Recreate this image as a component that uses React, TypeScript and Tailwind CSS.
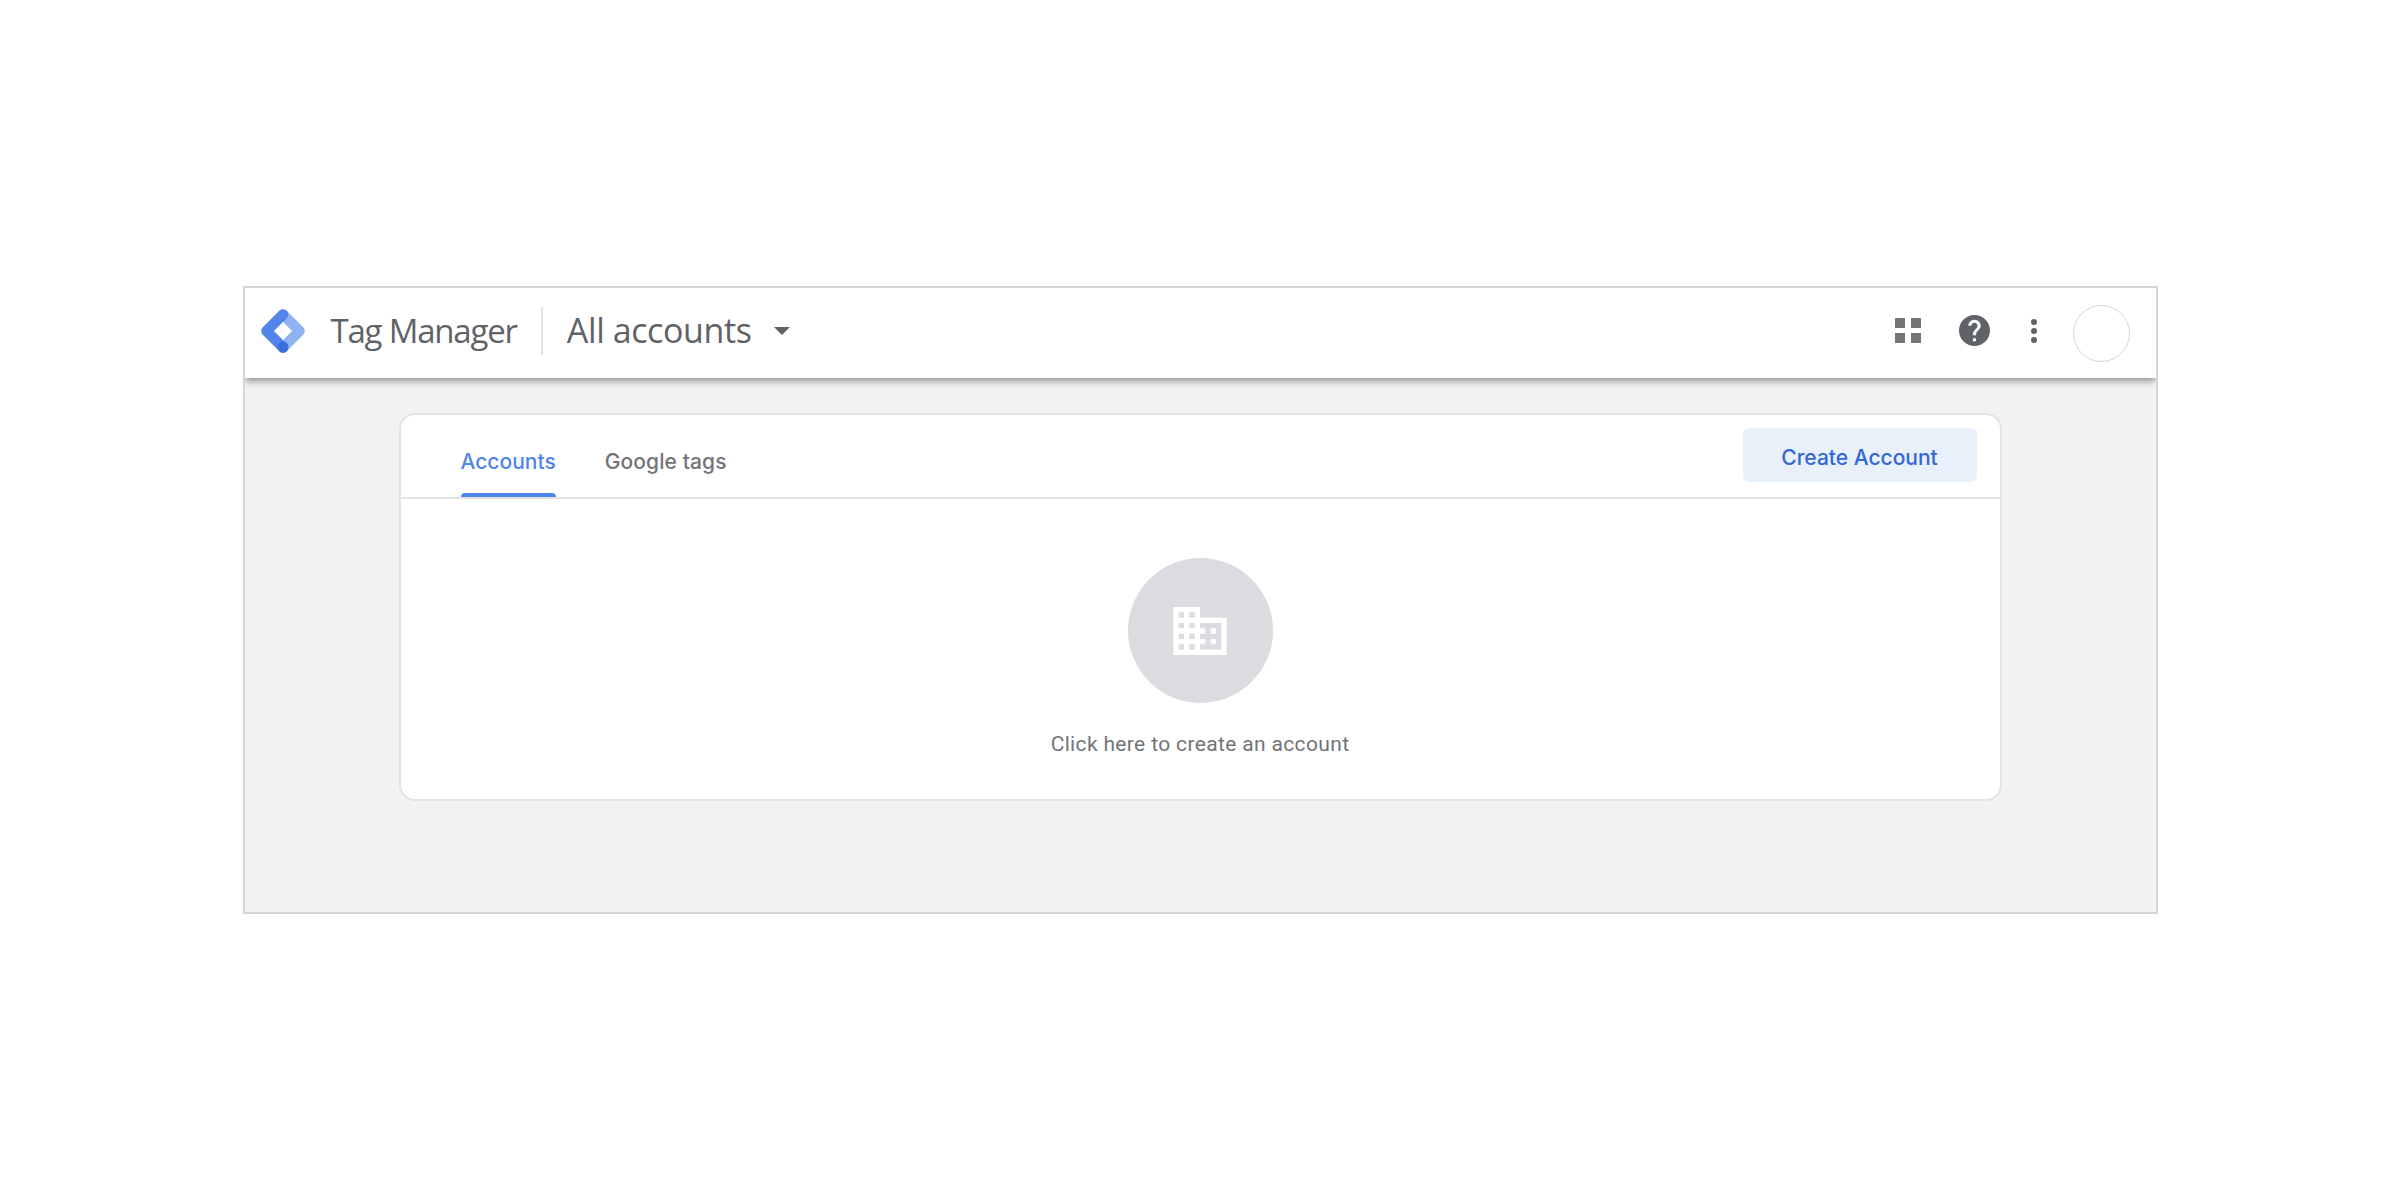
import React from 'react';

const GtmLogo = () => (
  <svg width="46" height="46" viewBox="0 0 46 46" className="shrink-0">
    <path d="M23 6.5 L39.5 23 L23 39.5" fill="none" stroke="#8fb2f3" strokeWidth="10.5" strokeLinecap="round" strokeLinejoin="round" />
    <path d="M23 6.5 L6.5 23 L23 39.5" fill="none" stroke="#5285ec" strokeWidth="10.5" strokeLinecap="round" strokeLinejoin="round" />
    <circle cx="23" cy="39" r="5.5" fill="#3a6fdc" />
  </svg>
);

const AppsIcon = () => (
  <svg width="26" height="25" viewBox="0 0 26 25" fill="#757575">
    <rect x="0" y="0" width="10" height="10" />
    <rect x="16" y="0" width="10" height="10" />
    <rect x="0" y="15" width="10" height="10" />
    <rect x="16" y="15" width="10" height="10" />
  </svg>
);

const HelpIcon = () => (
  <svg width="36" height="36" viewBox="2 2 20 20" fill="#5f6368" className="w-[31px] h-[31px]">
    <path d="M12 2C6.48 2 2 6.48 2 12s4.48 10 10 10 10-4.48 10-10S17.52 2 12 2zm1 17h-2v-2h2v2zm2.07-7.75l-.9.92C13.45 12.9 13 13.5 13 15h-2v-.5c0-1.1.45-2.1 1.17-2.83l1.24-1.26c.37-.36.59-.86.59-1.41 0-1.1-.9-2-2-2s-2 .9-2 2H8c0-2.21 1.79-4 4-4s4 1.79 4 4c0 .88-.36 1.68-.93 2.25z" />
  </svg>
);

const MoreIcon = () => (
  <svg width="8" height="26" viewBox="0 0 8 26" fill="#5f6368">
    <circle cx="4" cy="4" r="3" />
    <circle cx="4" cy="13" r="3" />
    <circle cx="4" cy="22" r="3" />
  </svg>
);

const DomainIcon = () => (
  <svg width="64" height="64" viewBox="0 0 24 24" fill="#ffffff">
    <path d="M12 7V3H2v18h20V7H12zM6 19H4v-2h2v2zm0-4H4v-2h2v2zm0-4H4V9h2v2zm0-4H4V5h2v2zm4 12H8v-2h2v2zm0-4H8v-2h2v2zm0-4H8V9h2v2zm0-4H8V5h2v2zm10 12h-8v-2h2v-2h-2v-2h2v-2h-2V9h8v10zm-2-8h-2v2h2v-2zm0 4h-2v2h2v-2z" />
  </svg>
);

export default function App() {
  return (
    <div className="h-screen bg-white flex items-center justify-center font-['Roboto',sans-serif]">
      <div className="w-[1915px] h-[628px] border-2 border-[#d6d6d6] bg-[#f1f2f4] flex flex-col overflow-hidden">
        <header className="relative z-10 h-[90px] shrink-0 bg-white flex items-center pl-[15px] pr-[26px] pb-[5px] shadow-[0_3px_7px_rgba(60,64,67,0.55)]">
          <GtmLogo />
          <span className="ml-[25px] text-[33px] tracking-[-1.2px] text-[#5f6368] font-['Open_Sans',sans-serif]">Tag Manager</span>
          <div className="ml-[24px] w-[2px] h-[48px] bg-[#e3e4e6]" />
          <span className="ml-[24px] text-[34px] tracking-[-0.4px] text-[#5f6368] font-['Open_Sans',sans-serif]">All accounts</span>
          <div className="ml-[23px] w-0 h-0 border-x-[8px] border-x-transparent border-t-[8px] border-t-[#5f6368]" />
          <div className="ml-auto flex items-center">
            <AppsIcon />
            <div className="ml-[38px]"><HelpIcon /></div>
            <div className="ml-[40px]"><MoreIcon /></div>
            <div className="ml-[35px] mt-[5px] w-[57px] h-[57px] rounded-full border border-[#d6d6d6] bg-white" />
          </div>
        </header>

        <main className="mt-[35px] ml-[154px] w-[1603px] h-[388px] bg-white border-2 border-[#e1e3e6] rounded-[16px] flex flex-col">
          <div className="h-[84px] shrink-0 flex items-start border-b-2 border-[#e1e3e6] pl-[60px] pr-[23px] font-['Inter',sans-serif]">
            <div className="h-full flex flex-col justify-end">
              <span className="text-[21px] font-medium text-[#4f84ec] mb-[16px]">Accounts</span>
              <div className="h-[4px] rounded-t-[4px] bg-[#4f84ec]" />
            </div>
            <div className="ml-[49px] h-full flex flex-col justify-end">
              <span className="text-[21px] font-medium tracking-[0.1px] text-[#727477] mb-[20px]">Google tags</span>
            </div>
            <button className="ml-auto mt-[13px] pt-[5px] w-[234px] h-[54px] rounded-[6px] bg-[#e8f0fa] text-[21px] font-medium text-[#3367d6]">
              Create Account
            </button>
          </div>
          <div className="flex-1 flex flex-col items-center pt-[59px]">
            <div className="w-[145px] h-[145px] rounded-full bg-[#dadce0] flex items-center justify-center">
              <DomainIcon />
            </div>
            <p className="mt-[26px] text-[21px] tracking-[0.35px] text-[#727477]">Click here to create an account</p>
          </div>
        </main>
      </div>
    </div>
  );
}
